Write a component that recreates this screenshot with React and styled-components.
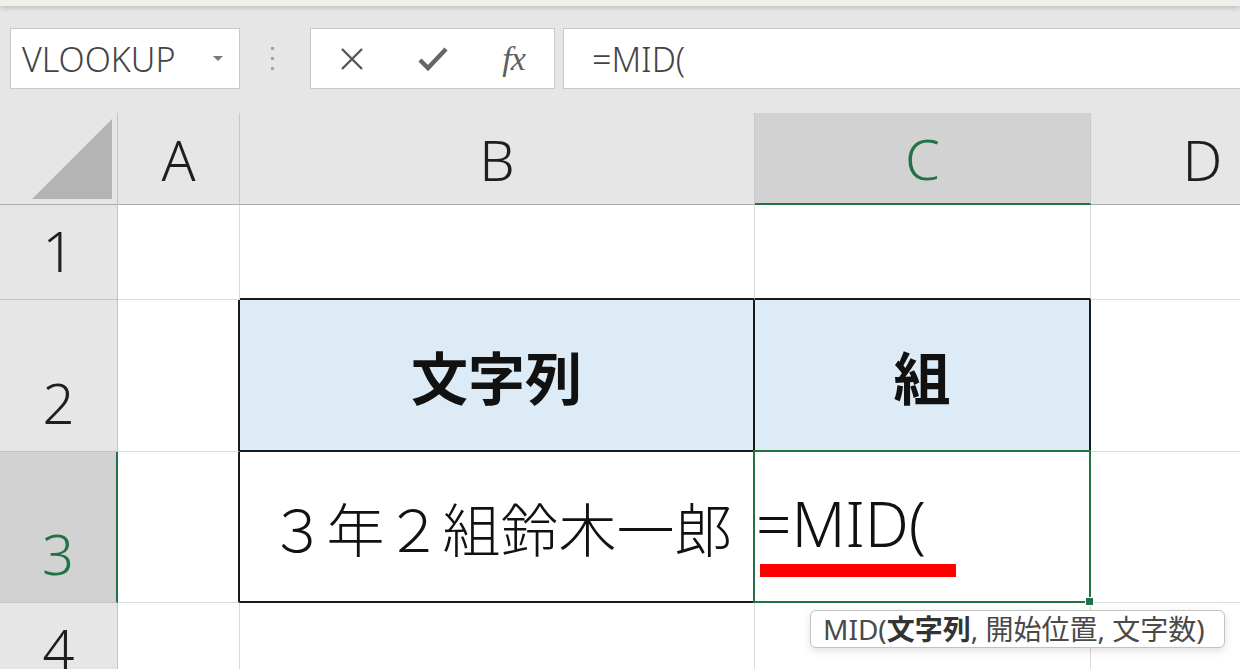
import React from "react";
import styled, { createGlobalStyle } from "styled-components";

const GlobalStyle = createGlobalStyle`
  html, body {
    margin: 0;
    padding: 0;
    background: #fff;
  }
  body {
    width: 1240px;
    height: 669px;
    overflow: hidden;
    font-family: "Noto Sans", "Noto Sans CJK JP", sans-serif;
  }
`;

const Window = styled.div`
  width: 1240px;
  height: 669px;
  display: flex;
  flex-direction: column;
  overflow: hidden;
`;

const TitleStrip = styled.div`
  height: 6px;
  flex-shrink: 0;
  background: #f3f0eb;
  box-shadow: 0 2px 5px rgba(0, 0, 0, 0.18);
  position: relative;
  z-index: 1;
`;

const FormulaBar = styled.div`
  height: 107px;
  flex-shrink: 0;
  box-sizing: border-box;
  background: #e6e6e6;
  display: flex;
  align-items: flex-start;
  padding: 22px 0 0 10px;
`;

const NameBox = styled.div`
  width: 230px;
  height: 61px;
  box-sizing: border-box;
  background: #fff;
  border: 1px solid #c9c9c9;
  display: flex;
  align-items: center;
  justify-content: space-between;
  padding: 0 16px 0 11px;
  font-size: 34px;
  font-weight: 300;
  color: #444;
`;

const Caret = styled.span`
  width: 0;
  height: 0;
  border-left: 5px solid transparent;
  border-right: 5px solid transparent;
  border-top: 5px solid #777;
`;

const Grip = styled.div`
  width: 64px;
  height: 61px;
  display: flex;
  flex-direction: column;
  align-items: center;
  justify-content: center;
  gap: 7px;

  span {
    width: 3px;
    height: 3px;
    background: #a3a3a3;
  }
`;

const ButtonBox = styled.div`
  width: 245px;
  height: 61px;
  margin-left: 6px;
  box-sizing: border-box;
  background: #fff;
  border: 1px solid #c9c9c9;
  display: flex;
  align-items: center;
`;

const BarButton = styled.div`
  width: 81px;
  height: 100%;
  display: flex;
  align-items: center;
  justify-content: center;
  color: #5a5a5a;
`;

const Fx = styled.span`
  font-family: "Liberation Serif", "DejaVu Serif", serif;
  font-style: italic;
  font-size: 34px;
  color: #5f5f5f;
  letter-spacing: -1px;
`;

const FormulaInput = styled.div`
  flex: 1;
  height: 61px;
  margin-left: 8px;
  box-sizing: border-box;
  background: #fff;
  border: 1px solid #c9c9c9;
  border-right: none;
  display: flex;
  align-items: center;
  padding-left: 28px;
  font-size: 34px;
  font-weight: 300;
  color: #444;
`;

const Sheet = styled.div`
  display: grid;
  grid-template-columns: 118px 122px 515px 336px 224px;
  grid-template-rows: 92px 95px 152px 151px 95px;
`;

const Corner = styled.div`
  box-sizing: border-box;
  background: #e6e6e6;
  border-right: 1px solid #c4c4c4;
  border-bottom: 1px solid #ababab;
  display: flex;
  align-items: flex-end;
  justify-content: flex-end;
  padding: 0 5px 5px 0;

  &::before {
    content: "";
    width: 80px;
    height: 80px;
    background: #b4b4b4;
    clip-path: polygon(100% 0, 100% 100%, 0 100%);
  }
`;

const ColHeader = styled.div`
  box-sizing: border-box;
  background: ${(p) => (p.$active ? "#d2d2d2" : "#e6e6e6")};
  color: ${(p) => (p.$active ? "#217346" : "#1e1e1e")};
  border-right: 1px solid #c8c8c8;
  border-bottom: ${(p) =>
    p.$active ? "2px solid #217346" : "1px solid #ababab"};
  display: flex;
  align-items: center;
  justify-content: center;
  font-size: 56px;
  font-weight: 300;
  line-height: 1;
`;

const RowHeader = styled.div`
  box-sizing: border-box;
  background: ${(p) => (p.$active ? "#d2d2d2" : "#e6e6e6")};
  color: ${(p) => (p.$active ? "#217346" : "#1e1e1e")};
  border-right: ${(p) =>
    p.$active ? "2px solid #217346" : "1px solid #c4c4c4"};
  border-bottom: 1px solid #c4c4c4;
  display: flex;
  align-items: flex-end;
  justify-content: center;
  padding-bottom: 21px;
  font-size: 56px;
  font-weight: 300;
  line-height: 1;
`;

const Cell = styled.div`
  position: relative;
  box-sizing: border-box;
  background: ${(p) => (p.$head ? "#ddebf7" : "#fff")};
  border-right: ${(p) => (p.$edgeR ? "2px solid #1a1a1a" : "1px solid #dadada")};
  border-bottom: ${(p) =>
    p.$edgeB ? "2px solid #1a1a1a" : "1px solid #dadada"};
  display: flex;
  align-items: center;
  justify-content: center;
  padding-left: ${(p) => (p.$head ? 0 : 8)}px;
  font-family: "Noto Sans CJK JP", sans-serif;
  font-size: ${(p) => (p.$head ? 57 : 58)}px;
  font-weight: ${(p) => (p.$head ? 700 : 300)};
  color: #111;
  line-height: 1;
`;

const EditCell = styled(Cell)`
  z-index: 2;
  flex-direction: column;
  align-items: flex-start;
  justify-content: flex-end;
  padding: 0 0 24px 1px;
  font-family: "Noto Sans", sans-serif;
  font-size: 62px;
  font-weight: 300;

  &::after {
    content: "";
    position: absolute;
    top: -2px;
    left: -2px;
    right: -2px;
    bottom: -2px;
    border: 2px solid #217346;
    pointer-events: none;
  }
`;

const FillHandle = styled.span`
  position: absolute;
  right: -5px;
  bottom: -5px;
  width: 7px;
  height: 7px;
  background: #217346;
  border: 1px solid #fff;
  z-index: 3;
`;

const Underline = styled.div`
  width: 196px;
  height: 13px;
  margin: 10px 0 0 4px;
  background: #ff0000;
`;

const Tooltip = styled.div`
  position: absolute;
  top: 158px;
  left: 55px;
  width: 415px;
  height: 38px;
  box-sizing: border-box;
  background: #fff;
  border: 1px solid #c2c2c2;
  border-radius: 6px;
  box-shadow: 0 3px 8px rgba(0, 0, 0, 0.12);
  display: flex;
  align-items: center;
  padding-left: 12px;
  white-space: nowrap;
  font-family: "Noto Sans", "Noto Sans CJK JP", sans-serif;
  font-size: 28px;
  font-weight: 400;
  color: #4a4a4a;

  b {
    color: #333;
    font-weight: 700;
  }
`;

const CloseIcon = () => (
  <svg width="26" height="26" viewBox="0 0 26 26">
    <path d="M3 3 L23 23 M23 3 L3 23" stroke="#555" strokeWidth="2.4" />
  </svg>
);

const CheckIcon = () => (
  <svg width="30" height="26" viewBox="0 0 30 26">
    <path
      d="M2 14 L10 22 L28 3"
      fill="none"
      stroke="#666"
      strokeWidth="4.4"
    />
  </svg>
);

export default function App() {
  return (
    <Window>
      <GlobalStyle />
      <TitleStrip />
      <FormulaBar>
        <NameBox>
          VLOOKUP
          <Caret />
        </NameBox>
        <Grip>
          <span />
          <span />
          <span />
        </Grip>
        <ButtonBox>
          <BarButton>
            <CloseIcon />
          </BarButton>
          <BarButton>
            <CheckIcon />
          </BarButton>
          <BarButton>
            <Fx>fx</Fx>
          </BarButton>
        </ButtonBox>
        <FormulaInput>=MID(</FormulaInput>
      </FormulaBar>

      <Sheet>
        <Corner />
        <ColHeader>A</ColHeader>
        <ColHeader>B</ColHeader>
        <ColHeader $active>C</ColHeader>
        <ColHeader>D</ColHeader>

        <RowHeader>1</RowHeader>
        <Cell />
        <Cell $edgeB />
        <Cell $edgeB />
        <Cell />

        <RowHeader>2</RowHeader>
        <Cell $edgeR />
        <Cell $head $edgeR $edgeB>
          文字列
        </Cell>
        <Cell $head $edgeR $edgeB>
          組
        </Cell>
        <Cell />

        <RowHeader $active>3</RowHeader>
        <Cell $edgeR />
        <Cell $edgeR $edgeB>
          ３年２組鈴木一郎
        </Cell>
        <EditCell $edgeR $edgeB>
          <span>=MID(</span>
          <Underline />
          <FillHandle />
          <Tooltip>
            MID(<b>文字列</b>, 開始位置, 文字数)
          </Tooltip>
        </EditCell>
        <Cell />

        <RowHeader>4</RowHeader>
        <Cell />
        <Cell />
        <Cell />
        <Cell />
      </Sheet>
    </Window>
  );
}
